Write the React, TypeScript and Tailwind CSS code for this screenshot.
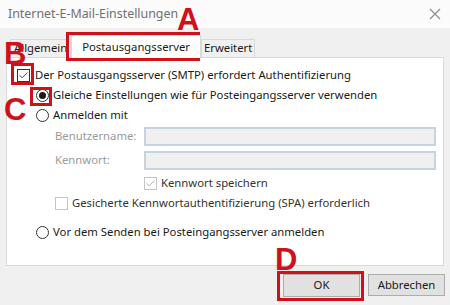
import { Check } from 'lucide-react'

const red = 'border-[#d0101a]'

function CheckBox({ checked = false, disabled = false }: { checked?: boolean; disabled?: boolean }) {
  return (
    <span
      className={`flex h-[13px] w-[13px] shrink-0 items-center justify-center border bg-white ${
        disabled ? 'border-[#c5c5c5]' : 'border-[#333333]'
      }`}
    >
      {checked && (
        <Check
          className={`h-[11px] w-[11px] ${disabled ? 'text-[#a8a8a8]' : 'text-[#333333]'}`}
          strokeWidth={2}
        />
      )}
    </span>
  )
}

function Radio({ checked = false }: { checked?: boolean }) {
  return (
    <span className="flex h-[13px] w-[13px] shrink-0 items-center justify-center rounded-full border border-[#333333] bg-white">
      {checked && <span className="h-[7px] w-[7px] rounded-full bg-[#1a1a1a]" />}
    </span>
  )
}

function Letter({ children, className }: { children: string; className: string }) {
  return (
    <span
      className={`absolute text-[31px] font-bold leading-none text-[#d0101a] ${className}`}
      style={{ fontFamily: '"Liberation Sans", Arial, sans-serif' }}
    >
      {children}
    </span>
  )
}

export default function App() {
  return (
    <div
      className="relative h-[305px] w-[450px] overflow-hidden bg-[#f0f0f0] text-[11.3px] text-[#1a1a1a]"
      style={{ fontFamily: '"Noto Sans", "Open Sans", sans-serif' }}
    >
      {/* Title bar */}
      <div className="flex h-[28px] items-center justify-between bg-[#fbfbfb] pl-[8px] pr-[8px]">
        <span className="text-[12.4px] text-[#707070]">Internet-E-Mail-Einstellungen</span>
        <svg width="12" height="12" viewBox="0 0 12 12" className="mr-[1px]">
          <path d="M1 1L11 11M11 1L1 11" stroke="#8a8a8a" strokeWidth="1.1" />
        </svg>
      </div>

      {/* Tabs */}
      <div className="mt-[7px] flex h-[22px] items-end pl-[10px]">
        <div className="flex h-[18px] items-center border border-b-0 border-[#d9d9d9] bg-[#f0f0f0] px-[3px]">
          Allgemein
        </div>
        <div className="relative z-10 -mb-px flex h-[23px] items-center border border-b-0 border-[#d9d9d9] bg-white px-[10px]">
          Postausgangsserver
        </div>
        <div className="flex h-[18px] items-center border border-b-0 border-[#d9d9d9] bg-[#f0f0f0] px-[2px]">
          Erweitert
        </div>
      </div>

      {/* Panel */}
      <div className="mx-[6px] flex h-[209px] flex-col border border-[#d9d9d9] bg-white pl-[10px] pt-[10px]">
        <div className="flex h-[14px] items-center gap-[5px]">
          <CheckBox checked />
          <span>Der Postausgangsserver (SMTP) erfordert Authentifizierung</span>
        </div>
        <div className="mt-[6px] flex flex-col gap-[6px] pl-[19px]">
          <div className="flex h-[14px] items-center gap-[4px]">
            <Radio checked />
            <span>Gleiche Einstellungen wie für Posteingangsserver verwenden</span>
          </div>
          <div className="flex h-[14px] items-center gap-[4px]">
            <Radio />
            <span>Anmelden mit</span>
          </div>
        </div>

        <div className="mt-[5px] grid grid-cols-[89px_292px] items-center gap-y-[5px] pl-[38px] text-[#9a9a9a]">
          <span>Benutzername:</span>
          <div className="h-[19px] border-2 border-[#c9d3df] bg-[#f0f0f0]" />
          <span>Kennwort:</span>
          <div className="h-[19px] border-2 border-[#c9d3df] bg-[#f0f0f0]" />
        </div>

        <div className="mt-[7px] flex h-[13px] items-center gap-[4px] pl-[127px] text-[#333333]">
          <CheckBox checked disabled />
          <span>Kennwort speichern</span>
        </div>
        <div className="mt-[7px] flex h-[13px] items-center gap-[4px] pl-[38px] text-[#333333]">
          <CheckBox disabled />
          <span>Gesicherte Kennwortauthentifizierung (SPA) erforderlich</span>
        </div>

        <div className="mt-[16px] flex h-[13px] items-center gap-[4px] pl-[19px]">
          <Radio />
          <span>Vor dem Senden bei Posteingangsserver anmelden</span>
        </div>
      </div>

      {/* Buttons */}
      <div className="mt-[8px] flex justify-end gap-[8px] pr-[5px]">
        <button className="flex h-[23px] w-[77px] items-center justify-center border border-[#adadad] bg-[#e1e1e1]">
          OK
        </button>
        <button className="flex h-[22px] w-[77px] items-center justify-center border border-[#adadad] bg-[#e1e1e1]">
          Abbrechen
        </button>
      </div>

      {/* Annotations */}
      <div className={`absolute left-[66px] top-[32px] h-[29px] w-[134px] border-[3px] ${red}`} />
      <div className={`absolute left-[11px] top-[63px] h-[22px] w-[23px] border-[3px] ${red}`} />
      <div className={`absolute left-[30px] top-[87px] h-[19px] w-[22px] border-[3px] ${red}`} />
      <div className={`absolute left-[277px] top-[271px] h-[30px] w-[87px] border-[3px] ${red}`} />
      <Letter className="left-[177px] top-[4px]">A</Letter>
      <Letter className="left-[4px] top-[38px]">B</Letter>
      <Letter className="left-[4px] top-[94px]">C</Letter>
      <Letter className="left-[275px] top-[244px]">D</Letter>
    </div>
  )
}
